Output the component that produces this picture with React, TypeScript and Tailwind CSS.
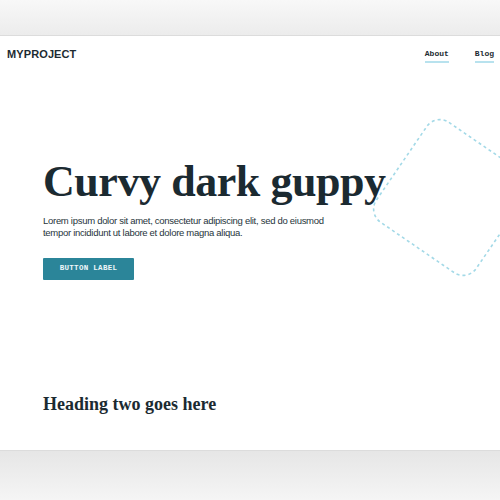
import React from "react";

const serif = "font-['Liberation_Serif',_'Times_New_Roman',_serif]";
const sans = "font-['Liberation_Sans',_Arial,_sans-serif]";
const mono = "font-['Liberation_Mono',_'Courier_New',_monospace]";

function Diamond() {
  return (
    <svg
      className="pointer-events-none absolute left-0 top-0"
      width="500"
      height="414"
      viewBox="0 36 500 414"
    >
      <rect
        x="391"
        y="137"
        width="121"
        height="121"
        rx="16"
        fill="none"
        stroke="#a3d9e7"
        strokeWidth="1.6"
        strokeDasharray="3 3"
        transform="rotate(34.4 451.5 197.5)"
      />
    </svg>
  );
}

export default function App() {
  return (
    <div className="h-[500px] w-[500px] overflow-hidden bg-[#efefef]">
      <div className="h-[35px] bg-gradient-to-b from-[#f8f8f8] to-[#ececec]" />
      <div className="h-px bg-[#dcdcdc]" />
      <div className="relative h-[414px] bg-white">
        <Diamond />
        <header className="relative flex h-[36px] items-center justify-between pl-[7px] pr-[6px]">
          <span className={`${sans} text-[11px] font-bold tracking-[0.01em] text-[#1d2b32]`}>MYPROJECT</span>
          <nav className={`${mono} mt-[3px] flex gap-[26px] text-[8px] font-bold text-[#1d2b32]`}>
            <a className="border-b-2 border-[#b8e2ee] pb-[2px] leading-[10px]">About</a>
            <a className="border-b-2 border-[#b8e2ee] pb-[2px] leading-[10px]">Blog</a>
          </nav>
        </header>
        <section className="relative pl-[43px]">
          <h1 className={`${serif} mt-[88px] text-[44px] font-bold leading-[44px] tracking-[-0.01em] text-[#1b2a31]`}>
            Curvy dark guppy
          </h1>
          <p className={`${sans} mt-[11px] w-[300px] text-[9.5px] leading-[12px] tracking-[-0.03em] text-[#26343b]`}>
            Lorem ipsum dolor sit amet, consectetur adipiscing elit, sed do eiusmod tempor incididunt ut labore et dolore magna aliqua.
          </p>
          <button
            className={`${mono} mt-[19px] flex h-[22px] w-[91px] items-center justify-center rounded-[1px] bg-[#2b8599] text-[7.5px] font-bold tracking-[0.04em] text-[#eef7f9]`}
          >
            BUTTON LABEL
          </button>
          <h2 className={`${serif} mt-[113px] text-[18px] font-bold leading-[22px] text-[#1b2a31]`}>
            Heading two goes here
          </h2>
        </section>
      </div>
      <div className="h-px bg-[#dcdcdc]" />
      <div className="h-[49px] bg-gradient-to-b from-[#e6e6e6] to-[#f5f5f5]" />
    </div>
  );
}
